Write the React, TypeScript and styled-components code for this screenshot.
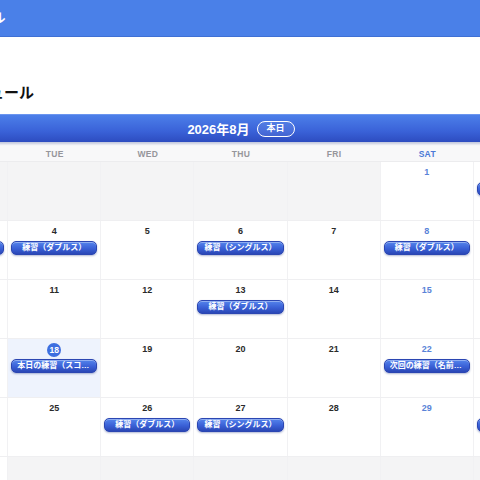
import React from 'react';
import styled, { createGlobalStyle } from 'styled-components';

const GlobalStyle = createGlobalStyle`
  html, body {
    margin: 0;
    padding: 0;
    background: #fff;
    overflow: hidden;
    font-family: 'Liberation Sans', 'Noto Sans CJK JP', sans-serif;
    color: #222;
  }
`;

type CalEvent = { title: string };

const YEAR = 2026;
const MONTH = 8;
const TODAY = 18;
const WEEKDAYS = ['MON', 'TUE', 'WED', 'THU', 'FRI', 'SAT', 'SUN'];

const events: Record<number, CalEvent> = {
  2: { title: '練習（シングルス）' },
  3: { title: '練習（ダブルス）' },
  4: { title: '練習（ダブルス）' },
  6: { title: '練習（シングルス）' },
  8: { title: '練習（ダブルス）' },
  13: { title: '練習（ダブルス）' },
  18: { title: '本日の練習（スコア記録）' },
  22: { title: '次回の練習（名前未定）' },
  26: { title: '練習（ダブルス）' },
  27: { title: '練習（シングルス）' },
  30: { title: '練習（ダブルス）' },
};

type Day = { date: number; inMonth: boolean; weekday: number };

const buildWeeks = (): Day[][] => {
  const first = new Date(YEAR, MONTH - 1, 1);
  const offset = (first.getDay() + 6) % 7;
  const start = new Date(YEAR, MONTH - 1, 1 - offset);
  const weeks: Day[][] = [];
  for (let w = 0; w < 6; w++) {
    const week: Day[] = [];
    for (let d = 0; d < 7; d++) {
      const cur = new Date(start);
      cur.setDate(start.getDate() + w * 7 + d);
      week.push({
        date: cur.getDate(),
        inMonth: cur.getMonth() === MONTH - 1,
        weekday: d,
      });
    }
    weeks.push(week);
  }
  return weeks;
};

export default function App() {
  const weeks = buildWeeks();

  return (
    <>
      <GlobalStyle />
      <TopBar>
        <Content>
          <AppName>テニスサークル</AppName>
        </Content>
      </TopBar>
      <Content>
        <PageTitle>練習スケジュール</PageTitle>
        <Calendar>
          <CalHeader>
            <MonthLabel>
              {YEAR}年{MONTH}月
            </MonthLabel>
            <TodayButton>本日</TodayButton>
          </CalHeader>
          <WeekdayRow>
            {WEEKDAYS.map((w, i) => (
              <WeekdayLabel key={w} $weekday={i}>
                {w}
              </WeekdayLabel>
            ))}
          </WeekdayRow>
          {weeks.map((week, wi) => (
            <WeekRow key={wi}>
              {week.map((day) => {
                const isToday = day.inMonth && day.date === TODAY;
                const ev = day.inMonth ? events[day.date] : undefined;
                return (
                  <Cell key={`${wi}-${day.weekday}`} $outside={!day.inMonth} $today={isToday}>
                    {day.inMonth &&
                      (isToday ? (
                        <TodayNumber>{day.date}</TodayNumber>
                      ) : (
                        <DayNumber $weekday={day.weekday}>{day.date}</DayNumber>
                      ))}
                    {ev && <EventPill>{ev.title}</EventPill>}
                  </Cell>
                );
              })}
            </WeekRow>
          ))}
        </Calendar>
      </Content>
    </>
  );
}

const Content = styled.div`
  width: 652px;
  margin-left: -85px;
`;

const TopBar = styled.header`
  height: 36px;
  background: #4a80e8;
  border-bottom: 1px solid #3f70d4;
  display: flex;
  align-items: center;
`;

const AppName = styled.div`
  color: #fff;
  font-size: 13px;
  font-weight: 700;
  line-height: 36px;
`;

const PageTitle = styled.h1`
  margin: 46px 0 12px;
  font-size: 15px;
  line-height: 19px;
  font-weight: 700;
  color: #111;
`;

const Calendar = styled.section`
  border-radius: 6px 6px 0 0;
  overflow: hidden;
  background: #fff;
`;

const CalHeader = styled.div`
  height: 27px;
  display: flex;
  align-items: center;
  justify-content: center;
  gap: 7px;
  background: linear-gradient(#4c7fe9, #3a62d8 60%, #2d4cc0);
  border-top: 1px solid #6b95ef;
  box-shadow: 0 2px 2px rgba(40, 60, 140, 0.25);
  position: relative;
  z-index: 1;
`;

const MonthLabel = styled.span`
  color: #fff;
  font-size: 13px;
  font-weight: 700;
`;

const TodayButton = styled.button`
  height: 16px;
  padding: 0 9px;
  border: 1.5px solid #fff;
  border-radius: 9px;
  background: rgba(255, 255, 255, 0.08);
  color: #fff;
  font-family: inherit;
  font-size: 9px;
  font-weight: 700;
  line-height: 13px;
`;

const WeekdayRow = styled.div`
  display: grid;
  grid-template-columns: repeat(7, 1fr);
  height: 19px;
  background: #f8f8f9;
  border-bottom: 1px solid #ececee;
`;

const WeekdayLabel = styled.div<{ $weekday: number }>`
  display: flex;
  align-items: center;
  justify-content: center;
  padding-top: 4px;
  font-size: 8.5px;
  font-weight: 700;
  letter-spacing: 0.3px;
  color: ${(p) => (p.$weekday === 5 ? '#4a78d6' : p.$weekday === 6 ? '#d65454' : '#96969b')};
`;

const WeekRow = styled.div`
  display: grid;
  grid-template-columns: repeat(7, 1fr);
  height: 59px;
  border-bottom: 1px solid #efeff1;
  box-sizing: border-box;
`;

const Cell = styled.div<{ $outside: boolean; $today: boolean }>`
  display: flex;
  flex-direction: column;
  align-items: stretch;
  gap: 3px;
  padding: 4px 3px 0;
  border-right: 1px solid #f1f1f3;
  background: ${(p) => (p.$outside ? '#f4f4f5' : p.$today ? '#eef3fd' : '#fff')};
  min-width: 0;
`;

const DayNumber = styled.div<{ $weekday: number }>`
  height: 13px;
  line-height: 13px;
  text-align: center;
  font-size: 9px;
  font-weight: 700;
  color: ${(p) => (p.$weekday === 5 ? '#5a83d8' : p.$weekday === 6 ? '#d65454' : '#2a2a2a')};
`;

const TodayNumber = styled.div`
  align-self: center;
  width: 14px;
  height: 14px;
  margin-bottom: -1px;
  border-radius: 50%;
  background: #3d6fe0;
  color: #fff;
  font-size: 8.5px;
  font-weight: 700;
  line-height: 14px;
  text-align: center;
`;

const EventPill = styled.div`
  height: 14px;
  padding: 0 5px;
  border-radius: 5px;
  border: 1px solid #2b46b2;
  background: linear-gradient(#5484ec, #3a60d6 55%, #2a47b6);
  box-shadow: 0 1px 2px rgba(30, 50, 130, 0.35), inset 0 1px 0 rgba(255, 255, 255, 0.35);
  color: #fff;
  font-size: 8px;
  font-weight: 700;
  line-height: 12px;
  text-align: center;
  white-space: nowrap;
  overflow: hidden;
  text-overflow: ellipsis;
  box-sizing: border-box;
`;
